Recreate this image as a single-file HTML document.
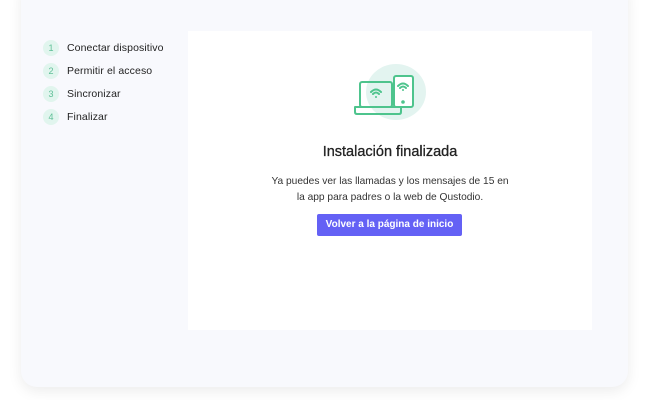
<!DOCTYPE html>
<html><head><style>
body{margin:0;width:650px;height:400px;background:#fff;overflow:hidden;font-family:"Liberation Sans",sans-serif;}
.card{position:absolute;left:21px;top:-20px;width:607px;height:407px;background:#f8f9fd;border-radius:16px;box-shadow:0 4px 14px rgba(0,0,0,0.08);}
.panel{position:absolute;left:188px;top:31px;width:404px;height:299px;background:#fff;}
.step{position:absolute;left:43px;height:16px;font-size:10.5px;color:#222;line-height:16px;}
.step .n{position:absolute;left:0;top:0;width:16px;height:16px;border-radius:50%;background:#e1f5ee;color:#5fbf97;font-size:9px;text-align:center;line-height:16px;}
.step .t{position:absolute;left:24px;top:0;white-space:nowrap;letter-spacing:0.1px;}
h1{position:absolute;left:188px;width:404px;top:144px;margin:0;text-align:center;font-size:14.5px;font-weight:normal;color:#222;-webkit-text-stroke:0.3px #222;}
p{position:absolute;left:188px;width:404px;top:174px;margin:0;text-align:center;font-size:10.2px;line-height:16px;color:#333;}
.btn{position:absolute;left:317px;top:214px;width:145px;height:22px;background:#6461f5;border-radius:2px;color:#fff;font-size:10px;font-weight:bold;text-align:center;line-height:22px;}
</style></head><body>
<div class="card"></div>
<div class="step" style="top:40px"><div class="n">1</div><div class="t">Conectar dispositivo</div></div>
<div class="step" style="top:63px"><div class="n">2</div><div class="t">Permitir el acceso</div></div>
<div class="step" style="top:86px"><div class="n">3</div><div class="t">Sincronizar</div></div>
<div class="step" style="top:109px"><div class="n">4</div><div class="t">Finalizar</div></div>
<div class="panel"></div>
<svg style="position:absolute;left:340px;top:55px" width="100" height="75" viewBox="0 0 100 75">
<ellipse cx="56" cy="37" rx="30" ry="28" fill="#e3f4f0"/>
<g fill="none" stroke="#4ec48d" stroke-width="2" stroke-linejoin="round" stroke-linecap="round">
<rect x="20" y="27" width="32" height="25" rx="2"/>
<path d="M15 52 H61 V57 Q61 59 59 59 H17 Q15 59 15 57 Z"/>
<rect x="54" y="21" width="19" height="31" rx="2" fill="#fff"/>
<path d="M33 39 Q36 36 39 39 M31 37 Q36 32 41 37"/>
<path d="M60 33 Q63 30 66 33 M58 31 Q63 26 68 31"/>
</g>
<circle cx="36" cy="42" r="1" fill="#4ec48d"/>
<circle cx="63" cy="35" r="1" fill="#4ec48d"/>
<circle cx="63" cy="47" r="1.8" fill="#4ec48d"/>
</svg>
<h1>Instalación finalizada</h1>
<p>Ya puedes ver las llamadas y los mensajes de 15 en<br>la app para padres o la web de Qustodio.</p>
<div class="btn">Volver a la página de inicio</div>
</body></html>
